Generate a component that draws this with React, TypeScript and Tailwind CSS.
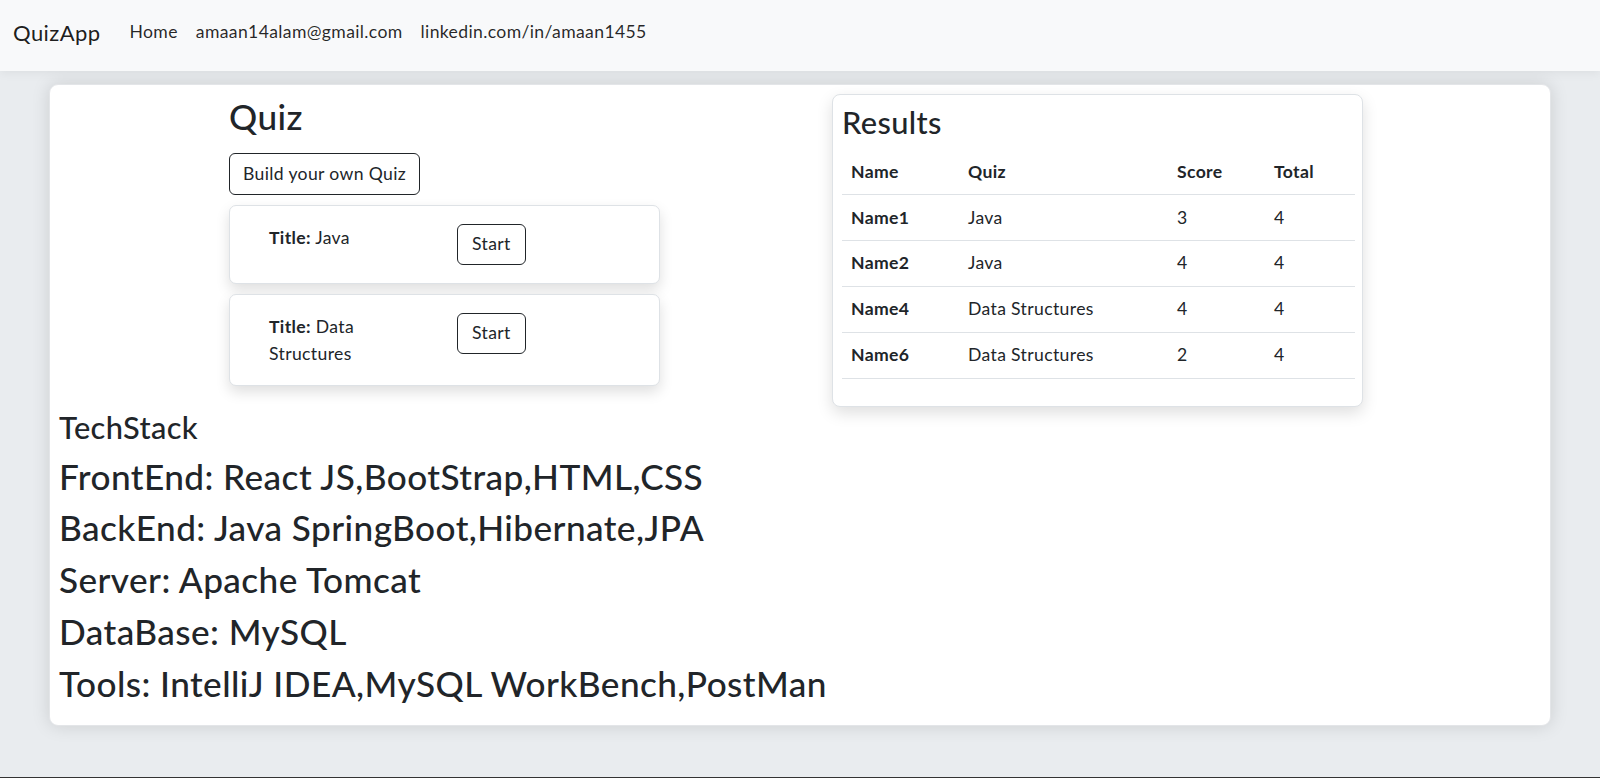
import React from "react";

const rows = [
  { name: "Name1", quiz: "Java", score: 3, total: 4 },
  { name: "Name2", quiz: "Java", score: 4, total: 4 },
  { name: "Name4", quiz: "Data Structures", score: 4, total: 4 },
  { name: "Name6", quiz: "Data Structures", score: 2, total: 4 },
];

const stack = [
  "FrontEnd: React JS,BootStrap,HTML,CSS",
  "BackEnd: Java SpringBoot,Hibernate,JPA",
  "Server: Apache Tomcat",
  "DataBase: MySQL",
  "Tools: IntelliJ IDEA,MySQL WorkBench,PostMan",
];

function QuizCard({ title }: { title: string }) {
  return (
    <div className="mb-[10px] flex items-start rounded-[7px] border border-[#dee2e6] bg-white py-[18px] shadow-[0_6px_14px_rgba(0,0,0,0.13)]">
      <div className="ml-[39px] mr-[48px] w-[140px] text-[17.6px] leading-[27px]">
        <span className="font-bold">Title:</span> {title}
      </div>
      <button className="h-[41px] rounded-[6px] border border-[#212529] px-[14px] text-[17.6px] leading-[26.4px] text-[#212529]">
        Start
      </button>
    </div>
  );
}

export default function App() {
  return (
    <div
      className="flex h-[778px] flex-col border-b border-[#333] bg-[#e9ecef] text-[#212529] [&_*]:tracking-[0.02em]"
      style={{ fontFamily: "Lato, 'Noto Sans', sans-serif" }}
    >
      <nav className="relative z-10 flex h-[71px] shrink-0 items-center bg-[#f8f9fa] pb-[6px] pl-[13px] text-black/90 shadow-[0_2px_10px_rgba(0,0,0,0.06)]">
        <span className="mr-[20px] text-[22px] leading-[33px]">QuizApp</span>
        <a className="px-[9px] text-[17.6px] text-black/85">Home</a>
        <a className="px-[9px] text-[17.6px] text-black/85">amaan14alam@gmail.com</a>
        <a className="px-[9px] text-[17.6px] text-black/85">linkedin.com/in/amaan1455</a>
      </nav>
      <main className="pl-[49px] pt-[13px]">
        <div className="w-[1502px] rounded-[9px] border border-[#e3e5e8] bg-white px-[9px] pt-[9px] pb-[11px] shadow-[0_0_18px_rgba(0,0,0,0.13)]">
          <div className="flex items-start">
            <div className="ml-[170px] w-[431px] pt-[1px]">
              <h2 className="mb-[16px] text-[35.2px] font-medium leading-[42px] tracking-[0.012em]!">Quiz</h2>
              <button className="mb-[10px] h-[42px] rounded-[6px] border border-[#212529] px-[13px] text-[17.6px] leading-[26.4px]">
                Build your own Quiz
              </button>
              <QuizCard title="Java" />
              <QuizCard title="Data Structures" />
            </div>
            <div className="ml-[172px] w-[531px] rounded-[8px] border border-[#dee2e6] bg-white px-[9px] pt-[9px] pb-[27px] shadow-[0_6px_16px_rgba(0,0,0,0.13)]">
              <h3 className="mb-[9px] text-[30.8px] font-medium leading-[37px] tracking-[0.012em]!">Results</h3>
              <table className="w-[513px] table-fixed border-collapse text-left text-[17.6px] leading-[26.4px]">
                <colgroup>
                  <col className="w-[117px]" />
                  <col className="w-[209px]" />
                  <col className="w-[97px]" />
                  <col className="w-[90px]" />
                </colgroup>
                <thead>
                  <tr className="border-b border-[#dee2e6]">
                    <th className="px-[9px] py-[9px] font-bold">Name</th>
                    <th className="px-[9px] py-[9px] font-bold">Quiz</th>
                    <th className="px-[9px] py-[9px] font-bold">Score</th>
                    <th className="px-[9px] py-[9px] font-bold">Total</th>
                  </tr>
                </thead>
                <tbody>
                  {rows.map((r) => (
                    <tr key={r.name} className="border-b border-[#dee2e6]">
                      <th className="px-[9px] py-[9.2px] font-bold">{r.name}</th>
                      <td className="px-[9px] py-[9.2px]">{r.quiz}</td>
                      <td className="px-[9px] py-[9.2px]">{r.score}</td>
                      <td className="px-[9px] py-[9.2px]">{r.total}</td>
                    </tr>
                  ))}
                </tbody>
              </table>
            </div>
          </div>
          <div className="pt-[2px]">
            <h3 className="mb-[9px] text-[30.8px] font-medium leading-[37px] tracking-[0.012em]!">TechStack</h3>
            {stack.map((s) => (
              <h2 key={s} className="mb-[9px] text-[35.2px] font-medium leading-[42.8px] tracking-[0.012em]!">
                {s}
              </h2>
            ))}
          </div>
        </div>
      </main>
    </div>
  );
}
